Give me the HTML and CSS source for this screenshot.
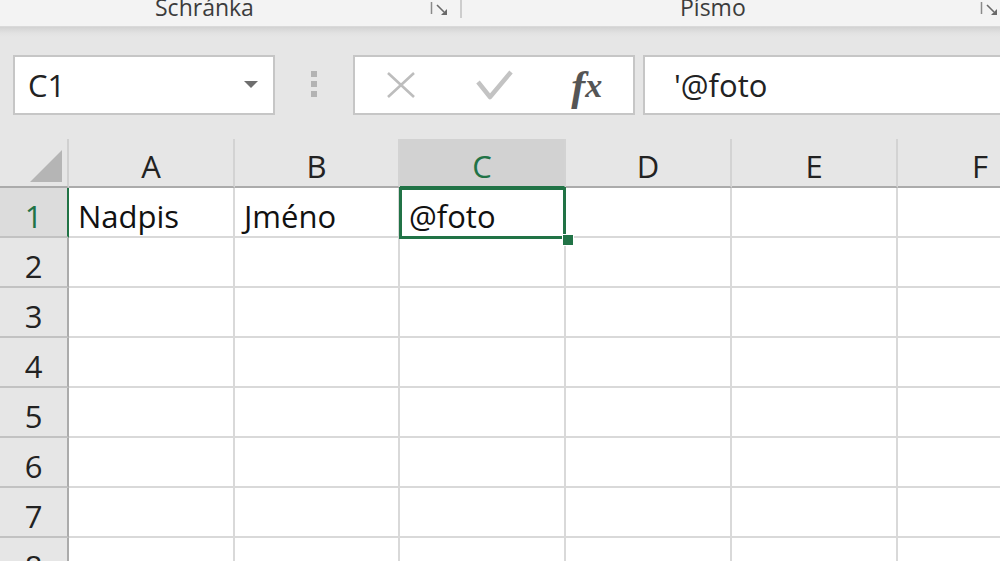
FILE: index.html
```html
<!DOCTYPE html>
<html lang="cs">
<head>
<meta charset="utf-8">
<title>Excel</title>
<link rel="stylesheet" href="styles.css">
</head>
<body>
<div class="app">
  <div class="ribbon">
    <div class="group g1">
      <span class="glabel">Schránka</span>
      <svg class="launcher" width="20" height="17" viewBox="0 0 20 17"><path d="M1.5 2 V14" stroke="#8a8a8a" stroke-width="1.5" fill="none"/><path d="M7 5 L14 12" stroke="#6a6a6a" stroke-width="1.6" fill="none"/><path d="M17 15 L11 15 L17 9 Z" fill="#6a6a6a"/></svg>
    </div>
    <div class="gsep"></div>
    <div class="group g2">
      <span class="glabel">Písmo</span>
      <svg class="launcher" width="20" height="17" viewBox="0 0 20 17"><path d="M1.5 2 V14" stroke="#8a8a8a" stroke-width="1.5" fill="none"/><path d="M7 5 L14 12" stroke="#6a6a6a" stroke-width="1.6" fill="none"/><path d="M17 15 L11 15 L17 9 Z" fill="#6a6a6a"/></svg>
    </div>
  </div>

  <div class="fbar">
    <div class="namebox"><span class="nbtext">C1</span><span class="dd"></span></div>
    <div class="grip"><i></i><i></i><i></i></div>
    <div class="fbtns">
      <span class="fbtn"><svg width="32" height="28" viewBox="0 0 32 28"><path d="M3 2 L29 26 M29 2 L3 26" stroke="#bdbdbd" stroke-width="2.6" fill="none"/></svg></span>
      <span class="fbtn"><svg width="37" height="30" viewBox="0 0 37 30"><path d="M2 12 L14 27 L35 2" stroke="#c3c3c3" stroke-width="4.5" fill="none" stroke-linejoin="round"/></svg></span>
      <span class="fbtn fx"><span class="fxf">f</span><span class="fxx">x</span></span>
    </div>
    <div class="finput">'@foto</div>
  </div>

  <div class="sheet">
    <div class="corner"><svg width="69" height="49" viewBox="0 0 69 49"><path d="M30 43 L62 11 L62 43 Z" fill="#b5b5b5"/></svg></div>
    <div class="ch">A</div>
    <div class="ch">B</div>
    <div class="ch sel">C</div>
    <div class="ch">D</div>
    <div class="ch">E</div>
    <div class="ch">F</div>

    <div class="rh sel">1</div>
    <div class="c">Nadpis</div>
    <div class="c">Jméno</div>
    <div class="c active">@foto</div>
    <div class="c"></div>
    <div class="c"></div>
    <div class="c"></div>

    <div class="rh">2</div><div class="c"></div><div class="c"></div><div class="c"></div><div class="c"></div><div class="c"></div><div class="c"></div>
    <div class="rh">3</div><div class="c"></div><div class="c"></div><div class="c"></div><div class="c"></div><div class="c"></div><div class="c"></div>
    <div class="rh">4</div><div class="c"></div><div class="c"></div><div class="c"></div><div class="c"></div><div class="c"></div><div class="c"></div>
    <div class="rh">5</div><div class="c"></div><div class="c"></div><div class="c"></div><div class="c"></div><div class="c"></div><div class="c"></div>
    <div class="rh">6</div><div class="c"></div><div class="c"></div><div class="c"></div><div class="c"></div><div class="c"></div><div class="c"></div>
    <div class="rh">7</div><div class="c"></div><div class="c"></div><div class="c"></div><div class="c"></div><div class="c"></div><div class="c"></div>
    <div class="rh">8</div><div class="c"></div><div class="c"></div><div class="c"></div><div class="c"></div><div class="c"></div><div class="c"></div>
  </div>
</div>
</body>
</html>
```

FILE: styles.css
```css
* { box-sizing: border-box; }

html, body {
  margin: 0;
  padding: 0;
  width: 1000px;
  height: 561px;
  overflow: hidden;
  background: #e6e6e6;
  font-family: "Open Sans", "Noto Sans", sans-serif;
}

.app {
  width: 1000px;
  height: 561px;
  overflow: hidden;
  display: flex;
  flex-direction: column;
}

/* Ribbon */
.ribbon {
  height: 27px;
  flex: 0 0 27px;
  background: #f3f3f3;
  border-bottom: 1px solid #d9d9d9;
  display: flex;
  overflow: hidden;
}

.group {
  display: flex;
  align-items: flex-start;
  height: 26px;
}

.g1 {
  width: 460px;
  padding-left: 155px;
}

.g2 {
  flex: 1;
  padding-left: 218px;
}

.glabel {
  font-size: 23px;
  line-height: 14px;
  color: #3c3c3c;
  white-space: nowrap;
}

.launcher {
  margin-left: auto;
  margin-right: 10px;
  margin-top: 0;
}

.g2 .launcher {
  margin-right: 0;
}

.gsep {
  width: 2px;
  height: 18px;
  background: #cdcdcd;
}

/* Formula bar */
.fbar {
  flex: 0 0 112px;
  height: 112px;
  padding: 28px 0 24px 13px;
  display: flex;
  background: linear-gradient(#d2d2d2 0, #e2e2e2 6px, #e6e6e6 10px);
}

.namebox {
  width: 262px;
  height: 60px;
  background: #fff;
  border: 2px solid #c6c6c6;
  display: flex;
  align-items: flex-start;
  padding-left: 13px;
  padding-right: 15px;
}

.nbtext {
  font-size: 31px;
  line-height: 44px;
  padding-top: 6px;
  color: #222;
}

.dd {
  margin-left: auto;
  margin-top: 24px;
  width: 0;
  height: 0;
  border-left: 7.5px solid transparent;
  border-right: 7.5px solid transparent;
  border-top: 7px solid #6e6e6e;
}

.grip {
  width: 78px;
  display: flex;
  flex-direction: column;
  align-items: center;
  gap: 4px;
  padding-top: 16px;
}

.grip i {
  display: block;
  width: 6px;
  height: 6px;
  background: #b3b3b3;
}

.fbtns {
  width: 282px;
  height: 60px;
  background: #fff;
  border: 2px solid #c6c6c6;
  display: flex;
  align-items: center;
}

.fbtn {
  width: 93px;
  height: 56px;
  display: flex;
  align-items: center;
  justify-content: center;
}

.fbtn svg {
  display: block;
}

.fx {
  font-family: "Liberation Serif", "DejaVu Serif", serif;
  font-style: italic;
  color: #555;
  line-height: 1;
  padding-top: 2px;
}

.fxf {
  font-weight: bold;
  font-size: 42px;
  margin-right: 0;
}

.fxx {
  font-weight: bold;
  font-size: 34px;
}

.finput {
  flex: 1;
  margin-left: 8px;
  margin-right: -10px;
  height: 60px;
  background: #fff;
  border: 2px solid #c6c6c6;
  font-size: 31px;
  line-height: 44px;
  padding: 6px 0 0 29px;
  color: #222;
  white-space: nowrap;
}

/* Sheet */
.sheet {
  flex: 1;
  display: grid;
  grid-template-columns: 69px 166px 165px 166px 166px 166px 166px;
  grid-template-rows: 49px repeat(8, 50px);
  overflow: hidden;
}

.corner {
  background: #e6e6e6;
  border-right: 2px solid #d0d0d0;
  border-bottom: 2px solid #ababab;
}

.corner svg { display: block; }

.ch {
  background: #e6e6e6;
  border-right: 2px solid #d3d3d3;
  border-bottom: 2px solid #ababab;
  text-align: center;
  font-size: 31px;
  line-height: 44px;
  padding-top: 5px;
  color: #222;
}

.ch.sel {
  background: #d2d2d2;
  color: #217346;
  border-bottom-color: #217346;
}

.rh {
  background: #e6e6e6;
  border-right: 2px solid #ababab;
  border-bottom: 2px solid #c2c2c2;
  text-align: center;
  font-size: 31px;
  line-height: 44px;
  padding-top: 6px;
  color: #222;
}

.rh.sel {
  background: #dcdcdc;
  color: #217346;
  border-right-color: #217346;
}

.c {
  background: #fff;
  border-right: 2px solid #d9d9d9;
  border-bottom: 2px solid #d9d9d9;
  font-size: 31px;
  line-height: 44px;
  padding: 6px 0 0 9px;
  color: #111;
  white-space: nowrap;
}

.c.active {
  position: relative;
}

.c.active::before {
  content: "";
  position: absolute;
  left: -1px;
  top: -1px;
  right: -2px;
  bottom: -3px;
  border: 3px solid #217346;
  z-index: 1;
}

.c.active::after {
  content: "";
  position: absolute;
  left: 162px;
  top: 46px;
  width: 10px;
  height: 10px;
  background: #217346;
  border: 1px solid #fff;
  z-index: 2;
}
```
